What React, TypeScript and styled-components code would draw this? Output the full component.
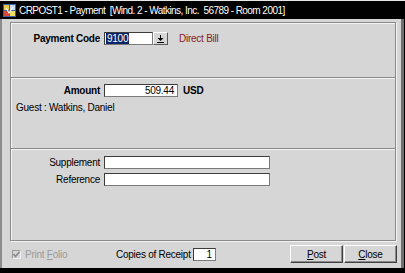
import React from 'react'
import styled, { createGlobalStyle } from 'styled-components'

const Global = createGlobalStyle`
  html, body {
    margin: 0;
    padding: 0;
    background: #000;
  }
  body {
    font-family: "Liberation Sans", Arial, sans-serif;
    font-size: 10px;
    letter-spacing: -0.25px;
    color: #000;
  }
`

const Window = styled.div`
  width: 405px;
  height: 273px;
  box-sizing: border-box;
  background: #000;
  border-top: 1px solid #e8e8e8;
  display: flex;
  flex-direction: column;
`

const TitleBar = styled.div`
  height: 18px;
  display: flex;
  align-items: center;
  gap: 3px;
  padding-left: 3px;
  color: #fff;
  font-size: 10px;
  letter-spacing: -0.55px;
  white-space: pre;
`

const Body = styled.div`
  height: 249px;
  box-sizing: border-box;
  background: #d6d6d6;
  border-left: 2px solid #8c8c8c;
  border-right: 3px solid #6e6e6e;
  margin-right: 1px;
  padding: 3px 5px 0 8px;
  display: flex;
  flex-direction: column;
`

const Panel = styled.div`
  height: 219px;
  box-sizing: border-box;
  border: 1px solid #8a8a8a;
  box-shadow: inset 1px 1px 0 #f4f4f4, 1px 1px 0 #f4f4f4;
  display: flex;
  flex-direction: column;
`

const Section = styled.div<{ $h: number; $pt: number; $last?: boolean }>`
  height: ${(p) => p.$h}px;
  box-sizing: border-box;
  padding-top: ${(p) => p.$pt}px;
  border-bottom: ${(p) => (p.$last ? 'none' : '1px solid #8a8a8a')};
  box-shadow: ${(p) => (p.$last ? 'none' : '0 1px 0 #f4f4f4')};
  display: flex;
  flex-direction: column;
  gap: 4px;
`

const Row = styled.div`
  display: flex;
  align-items: center;
  height: 13px;
`

const Label = styled.span<{ $bold?: boolean }>`
  width: 93px;
  padding-right: 4px;
  box-sizing: border-box;
  text-align: right;
  font-weight: ${(p) => (p.$bold ? 'bold' : 'normal')};
  white-space: nowrap;
`

const Field = styled.div<{ $w: number; $right?: boolean }>`
  width: ${(p) => p.$w}px;
  height: 13px;
  box-sizing: border-box;
  background: #fff;
  border: 1px solid #3c3c3c;
  border-right-color: #7a7a7a;
  border-bottom-color: #7a7a7a;
  display: flex;
  align-items: center;
  justify-content: ${(p) => (p.$right ? 'flex-end' : 'flex-start')};
  padding: 0 3px 0 1px;
  line-height: 11px;
`

const Selected = styled.span`
  background: #0a246a;
  color: #fff;
  padding: 0 1px;
`

const DropButton = styled.div`
  width: 15px;
  height: 13px;
  box-sizing: border-box;
  background: #d6d6d6;
  border: 1px solid;
  border-color: #fff #5a5a5a #5a5a5a #fff;
  display: flex;
  align-items: center;
  justify-content: center;
`

const Note = styled.span<{ $color?: string; $bold?: boolean }>`
  margin-left: ${(p) => (p.$bold ? 5 : 11)}px;
  color: ${(p) => p.$color ?? '#000'};
  font-weight: ${(p) => (p.$bold ? 'bold' : 'normal')};
`

const Guest = styled.div`
  padding-left: 5px;
  margin-top: 1px;
`

const Footer = styled.div`
  flex: 1;
  display: flex;
  align-items: center;
  padding-bottom: 1px;
`

const CheckWrap = styled.div`
  display: flex;
  align-items: center;
  gap: 4px;
  width: 104px;
  color: #9a9a9a;
  padding-left: 2px;
`

const Box = styled.div`
  width: 9px;
  height: 9px;
  box-sizing: border-box;
  background: #d6d6d6;
  border: 1px solid #9a9a9a;
  border-right-color: #eee;
  border-bottom-color: #eee;
  display: flex;
  align-items: center;
  justify-content: center;
`

const Copies = styled.div`
  display: flex;
  align-items: center;
  gap: 2px;
`

const Buttons = styled.div`
  margin-left: auto;
  display: flex;
  gap: 1px;
  margin-right: -1px;
`

const Button = styled.div`
  width: 53px;
  height: 18px;
  box-sizing: border-box;
  background: #d6d6d6;
  border: 1px solid;
  border-color: #fff #404040 #404040 #fff;
  box-shadow: inset -1px -1px 0 #8a8a8a;
  display: flex;
  align-items: center;
  justify-content: center;
`

const U = styled.span`
  text-decoration: underline;
`

const BottomBar = styled.div`
  flex: 1;
  background: #000;
`

const AppIcon = () => (
  <svg width="13" height="13" viewBox="0 0 13 13">
    <rect x="0" y="0" width="13" height="13" fill="#3a5fa8" />
    <rect x="1" y="1" width="5" height="5" fill="#e8c84a" />
    <rect x="7" y="1" width="5" height="5" fill="#c8d8f0" />
    <rect x="1" y="7" width="5" height="5" fill="#d84a3a" />
    <rect x="7" y="7" width="5" height="5" fill="#f0e060" />
    <path d="M3 4 L6 9 L10 3" stroke="#ffffff" strokeWidth="1.2" fill="none" />
  </svg>
)

const DropIcon = () => (
  <svg width="7" height="8" viewBox="0 0 7 8">
    <path d="M3.5 0 V5" stroke="#000" strokeWidth="1" />
    <path d="M0.5 3 L3.5 6 L6.5 3 Z" fill="#000" />
    <path d="M0 7.5 H7" stroke="#000" strokeWidth="1" />
  </svg>
)

const Tick = () => (
  <svg width="7" height="7" viewBox="0 0 7 7">
    <path d="M0.5 3 L2.5 5.5 L6.5 0.8" stroke="#8a8a8a" strokeWidth="1.6" fill="none" />
  </svg>
)

const App: React.FC = () => (
  <>
    <Global />
    <Window>
      <TitleBar>
        <AppIcon />
        <span>CRPOST1 - Payment  [Wind. 2 - Watkins, Inc.  56789 - Room 2001]</span>
      </TitleBar>
      <Body>
        <Panel>
          <Section $h={55} $pt={9}>
            <Row>
              <Label $bold>Payment Code</Label>
              <Field $w={49}>
                <Selected>9100</Selected>
              </Field>
              <DropButton>
                <DropIcon />
              </DropButton>
              <Note $color="#8b1a1a">Direct Bill</Note>
            </Row>
          </Section>
          <Section $h={71} $pt={6}>
            <Row>
              <Label $bold>Amount</Label>
              <Field $w={74} $right>
                509.44
              </Field>
              <Note $bold>USD</Note>
            </Row>
            <Guest>Guest : Watkins, Daniel</Guest>
          </Section>
          <Section $h={91} $pt={7} $last>
            <Row>
              <Label>Supplement</Label>
              <Field $w={166} />
            </Row>
            <Row>
              <Label>Reference</Label>
              <Field $w={166} />
            </Row>
          </Section>
        </Panel>
        <Footer>
          <CheckWrap>
            <Box>
              <Tick />
            </Box>
            <span>
              Print <U>F</U>olio
            </span>
          </CheckWrap>
          <Copies>
            <span>Copies of Receipt</span>
            <Field $w={23} $right>
              1
            </Field>
          </Copies>
          <Buttons>
            <Button>
              <span>
                <U>P</U>ost
              </span>
            </Button>
            <Button>
              <span>
                <U>C</U>lose
              </span>
            </Button>
          </Buttons>
        </Footer>
      </Body>
      <BottomBar />
    </Window>
  </>
)

export default App
